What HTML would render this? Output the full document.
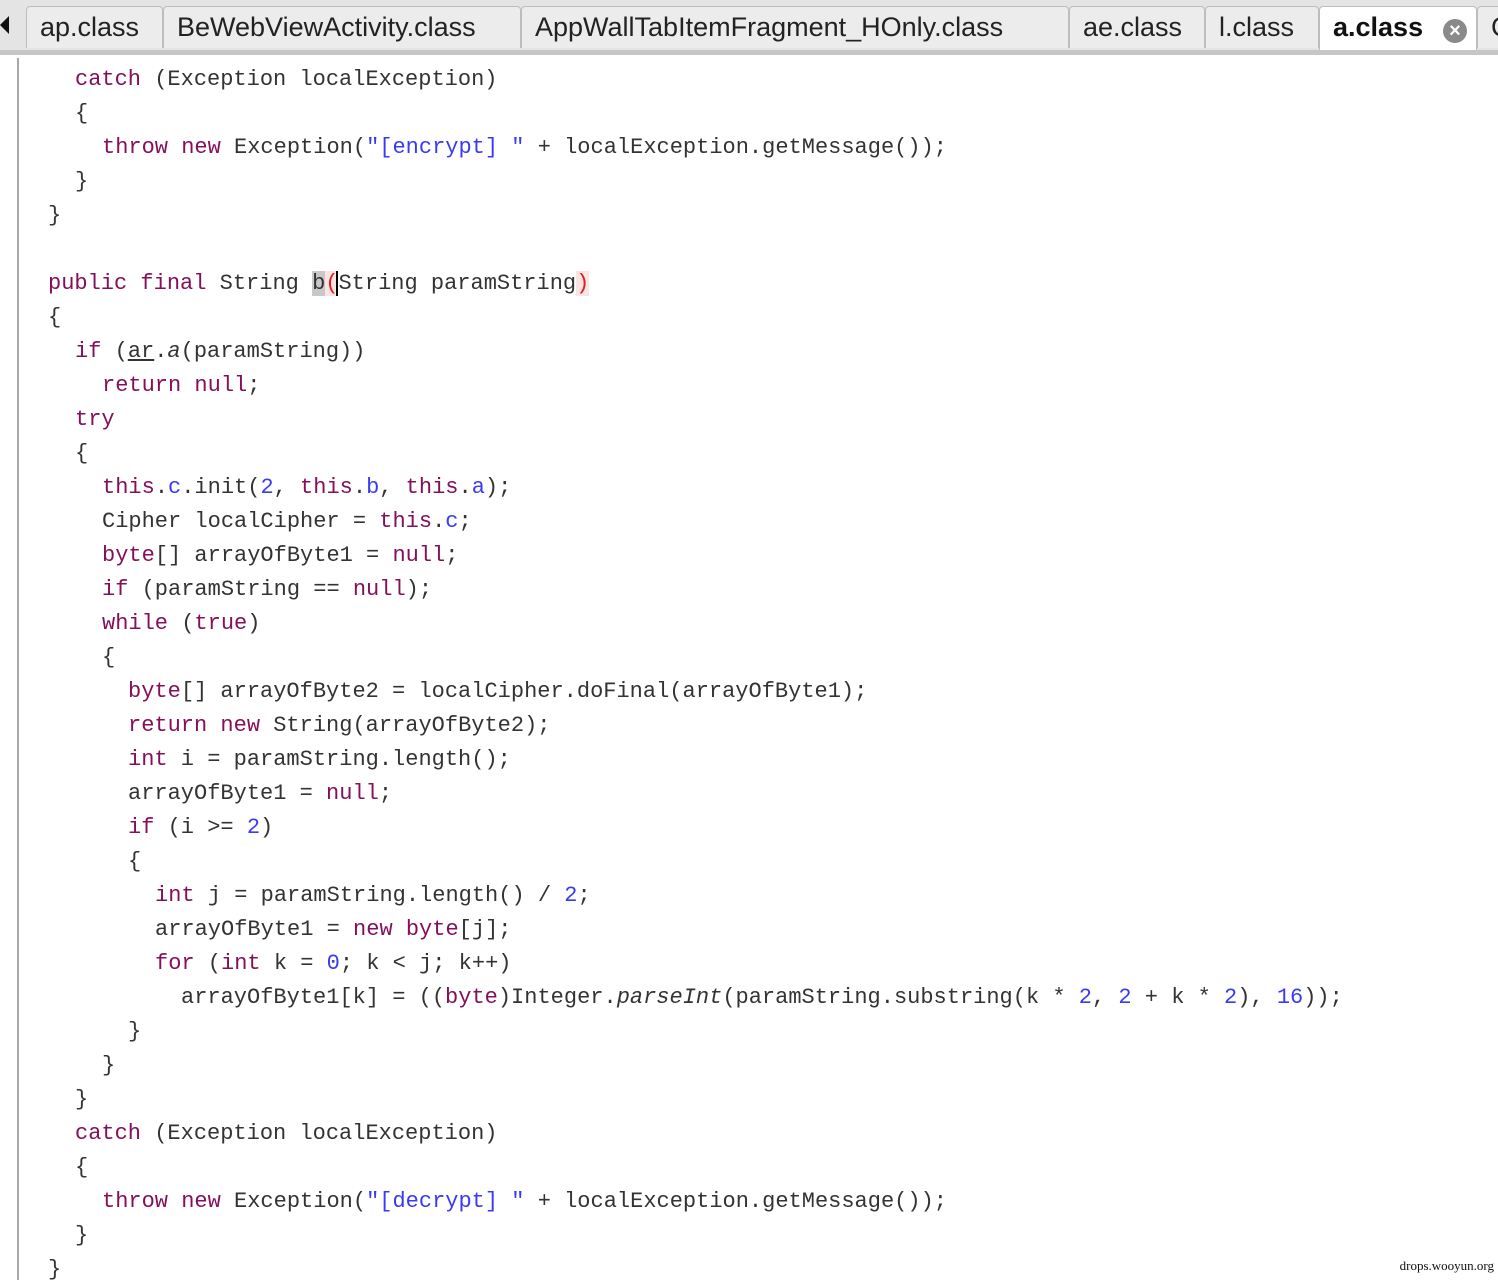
<!DOCTYPE html>
<html><head><meta charset="utf-8"><style>
body{margin:0;width:1498px;height:1280px;background:#fff;position:relative;overflow:hidden;font-family:"Liberation Mono",monospace;}
.bar{position:absolute;left:0;top:0;width:1498px;height:50px;background:#e4e4e4;}
.sep{position:absolute;left:0;top:50px;width:1498px;height:5px;background:#c6c6c6;}
.tab{position:absolute;top:6px;height:42px;background:#ececec;border:1px solid #bdbdbd;border-bottom:none;border-radius:4px 4px 0 0;box-sizing:border-box;font-family:"Liberation Sans",sans-serif;font-size:27px;color:#222;line-height:40px;padding-left:13px;overflow:hidden;white-space:nowrap;}
.tab.act{background:#fff;height:46px;font-weight:bold;color:#111;}
.gut{position:absolute;left:17px;top:58px;width:2px;height:1222px;background:#a8a8a8;}
.l{position:absolute;font-size:22px;line-height:34px;height:34px;color:#333;white-space:pre;margin-top:2px;}
.k{color:#85105a;}
.n{color:#3a3af5;}
.wm{position:absolute;right:4px;top:1258px;font-family:"Liberation Serif",serif;font-size:13px;color:#111;}
</style></head><body>
<div class="bar"></div>
<div style="position:absolute;left:0;top:16px;width:0;height:0;border-top:9px solid transparent;border-bottom:9px solid transparent;border-right:9px solid #111;"></div>
<div class="tab" style="left:26px;width:137px">ap.class</div>
<div class="tab" style="left:163px;width:358px">BeWebViewActivity.class</div>
<div class="tab" style="left:521px;width:548px">AppWallTabItemFragment_HOnly.class</div>
<div class="tab" style="left:1069px;width:136px">ae.class</div>
<div class="tab" style="left:1205px;width:114px">l.class</div>
<div class="tab act" style="left:1319px;width:158px">a.class<span style="position:absolute;left:123px;top:12px;width:24px;height:24px;border-radius:50%;background:#8a8a8a;color:#fff;font-size:20px;line-height:24px;text-align:center;font-weight:bold">×</span></div>
<div class="tab" style="left:1477px;width:40px">C</div>
<div class="sep"></div>
<div class="gut"></div>

<div class="l" style="left:75px;top:61px"><span class="k">catch</span> (Exception localException)</div>
<div class="l" style="left:75px;top:95px">{</div>
<div class="l" style="left:102px;top:129px"><span class="k">throw new</span> Exception(<span class="n">"[encrypt] "</span> + localException.getMessage());</div>
<div class="l" style="left:75px;top:163px">}</div>
<div class="l" style="left:48px;top:197px">}</div>
<div class="l" style="left:48px;top:265px"><span class="k">public final</span> String <span style="background:#c8c8c8">b</span><span style="color:#e02020;background:#fbe4e4">(</span><span style="border-left:2px solid #000;margin-left:-2px">S</span>tring paramString<span style="color:#e02020;background:#fbe4e4">)</span></div>
<div class="l" style="left:48px;top:299px">{</div>
<div class="l" style="left:75px;top:333px"><span class="k">if</span> (<u>ar</u>.<i>a</i>(paramString))</div>
<div class="l" style="left:102px;top:367px"><span class="k">return null</span>;</div>
<div class="l" style="left:75px;top:401px"><span class="k">try</span></div>
<div class="l" style="left:75px;top:435px">{</div>
<div class="l" style="left:102px;top:469px"><span class="k">this</span>.<span class="n">c</span>.init(<span class="n">2</span>, <span class="k">this</span>.<span class="n">b</span>, <span class="k">this</span>.<span class="n">a</span>);</div>
<div class="l" style="left:102px;top:503px">Cipher localCipher = <span class="k">this</span>.<span class="n">c</span>;</div>
<div class="l" style="left:102px;top:537px"><span class="k">byte</span>[] arrayOfByte1 = <span class="k">null</span>;</div>
<div class="l" style="left:102px;top:571px"><span class="k">if</span> (paramString == <span class="k">null</span>);</div>
<div class="l" style="left:102px;top:605px"><span class="k">while</span> (<span class="k">true</span>)</div>
<div class="l" style="left:102px;top:639px">{</div>
<div class="l" style="left:128px;top:673px"><span class="k">byte</span>[] arrayOfByte2 = localCipher.doFinal(arrayOfByte1);</div>
<div class="l" style="left:128px;top:707px"><span class="k">return new</span> String(arrayOfByte2);</div>
<div class="l" style="left:128px;top:741px"><span class="k">int</span> i = paramString.length();</div>
<div class="l" style="left:128px;top:775px">arrayOfByte1 = <span class="k">null</span>;</div>
<div class="l" style="left:128px;top:809px"><span class="k">if</span> (i &gt;= <span class="n">2</span>)</div>
<div class="l" style="left:128px;top:843px">{</div>
<div class="l" style="left:155px;top:877px"><span class="k">int</span> j = paramString.length() / <span class="n">2</span>;</div>
<div class="l" style="left:155px;top:911px">arrayOfByte1 = <span class="k">new byte</span>[j];</div>
<div class="l" style="left:155px;top:945px"><span class="k">for</span> (<span class="k">int</span> k = <span class="n">0</span>; k &lt; j; k++)</div>
<div class="l" style="left:181px;top:979px">arrayOfByte1[k] = ((<span class="k">byte</span>)Integer.<i>parseInt</i>(paramString.substring(k * <span class="n">2</span>, <span class="n">2</span> + k * <span class="n">2</span>), <span class="n">16</span>));</div>
<div class="l" style="left:128px;top:1013px">}</div>
<div class="l" style="left:102px;top:1047px">}</div>
<div class="l" style="left:75px;top:1081px">}</div>
<div class="l" style="left:75px;top:1115px"><span class="k">catch</span> (Exception localException)</div>
<div class="l" style="left:75px;top:1149px">{</div>
<div class="l" style="left:102px;top:1183px"><span class="k">throw new</span> Exception(<span class="n">"[decrypt] "</span> + localException.getMessage());</div>
<div class="l" style="left:75px;top:1217px">}</div>
<div class="l" style="left:48px;top:1251px">}</div>
<div class="wm">drops.wooyun.org</div>
</body></html>
